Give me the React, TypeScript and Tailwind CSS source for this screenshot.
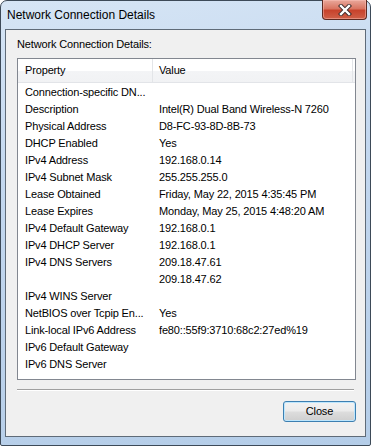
const rows: [string, string][] = [
  ["Connection-specific DN...", ""],
  ["Description", "Intel(R) Dual Band Wireless-N 7260"],
  ["Physical Address", "D8-FC-93-8D-8B-73"],
  ["DHCP Enabled", "Yes"],
  ["IPv4 Address", "192.168.0.14"],
  ["IPv4 Subnet Mask", "255.255.255.0"],
  ["Lease Obtained", "Friday, May 22, 2015 4:35:45 PM"],
  ["Lease Expires", "Monday, May 25, 2015 4:48:20 AM"],
  ["IPv4 Default Gateway", "192.168.0.1"],
  ["IPv4 DHCP Server", "192.168.0.1"],
  ["IPv4 DNS Servers", "209.18.47.61"],
  ["", "209.18.47.62"],
  ["IPv4 WINS Server", ""],
  ["NetBIOS over Tcpip En...", "Yes"],
  ["Link-local IPv6 Address", "fe80::55f9:3710:68c2:27ed%19"],
  ["IPv6 Default Gateway", ""],
  ["IPv6 DNS Server", ""],
];

function CloseGlyph() {
  return (
    <svg width="14" height="12" viewBox="0 0 14 12" aria-hidden>
      <path d="M3 2 L11 10 M11 2 L3 10" stroke="#3a2a2a" strokeWidth="4.2" strokeLinecap="square" />
      <path d="M3 2 L11 10 M11 2 L3 10" stroke="#ffffff" strokeWidth="2.4" strokeLinecap="square" />
    </svg>
  );
}

export default function App() {
  return (
    <div className="w-[371px] h-[446px] font-['Liberation_Sans',Arial,sans-serif] text-black">
      <div className="w-full h-full flex flex-col border border-[#3d4a58] rounded-t-[7px] rounded-b-[2px] bg-[linear-gradient(170deg,#d6e5f5_0%,#c4d8ef_35%,#bcd2eb_70%,#b4cde8_100%)] px-[4px] pb-[8px]">
        <div className="h-[28px] flex items-start justify-between shrink-0">
          <span className="pl-[2px] pt-[7px] text-[12px] leading-[14px] text-black">
            Network Connection Details
          </span>
          <button
            type="button"
            aria-label="Close"
            className="mt-[-1px] mr-[-1px] w-[45px] h-[20px] flex items-center justify-center rounded-b-[4px] border border-[#5c2a22] border-t-0 bg-[linear-gradient(180deg,#e9a89b_0%,#d97562_45%,#c7432c_55%,#cf6048_100%)] shadow-[inset_0_0_0_1px_rgba(255,200,190,0.45)]"
          >
            <CloseGlyph />
          </button>
        </div>

        <div className="flex-1 flex flex-col border border-[#5f6b78] bg-[#f0f0f0] pl-[11px] pr-[9px]">
          <p className="m-0 pt-[8px] h-[28px] text-[11px] leading-[13px] tracking-[-0.15px]">
            Network Connection Details:
          </p>

          <div className="h-[322px] border border-[#828790] bg-white flex flex-col overflow-hidden">
            <div className="h-[24px] shrink-0 flex bg-[linear-gradient(180deg,#ffffff_0%,#ffffff_50%,#f3f4f6_51%,#f1f2f4_100%)] border-b border-[#e2e4e8]">
              <div className="w-[135px] pl-[7px] flex items-center border-r border-[#e3e5e8] text-[11px] tracking-[-0.15px]">
                Property
              </div>
              <div className="w-[200px] pl-[6px] flex items-center border-r border-[#e3e5e8] text-[11px] tracking-[-0.15px]">
                Value
              </div>
            </div>
            <div className="pt-[1px]">
              {rows.map(([k, v], i) => (
                <div key={i} className="h-[17px] flex items-center text-[11px] tracking-[-0.15px] whitespace-nowrap">
                  <span className="w-[135px] pl-[7px] shrink-0">{k}</span>
                  <span className="pl-[6px]">{v}</span>
                </div>
              ))}
            </div>
          </div>

          <div className="mt-[9px] h-[2px] border-t border-[#a0a0a0] border-b border-b-white mr-[2px]" />

          <div className="mt-[10px] flex justify-end">
            <button
              type="button"
              className="w-[73px] h-[21px] rounded-[3px] border border-[#3c7fb1] bg-[linear-gradient(180deg,#f2f2f2_0%,#ebebeb_48%,#dddddd_52%,#cfcfcf_100%)] shadow-[inset_0_0_0_1px_#bde6fd] text-[11px] leading-[13px] tracking-[-0.15px]"
            >
              Close
            </button>
          </div>
        </div>
      </div>
    </div>
  );
}
